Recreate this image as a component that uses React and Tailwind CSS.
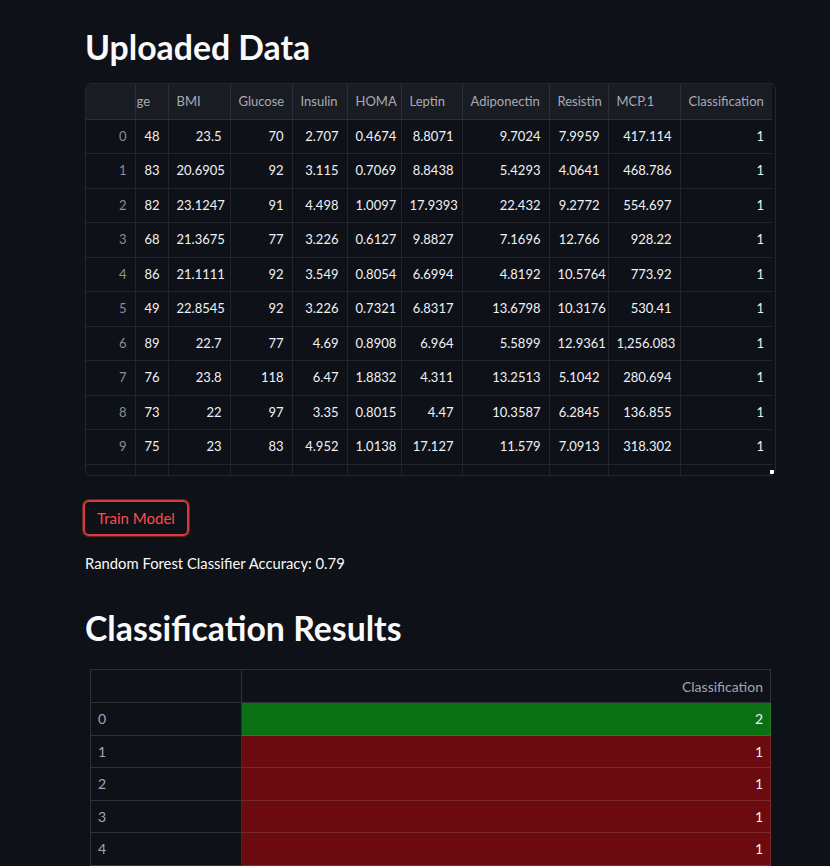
import React from 'react';

const columns = [
  { key: 'idx', label: '', width: 49 },
  { key: 'age', label: 'ge', width: 33 },
  { key: 'bmi', label: 'BMI', width: 62 },
  { key: 'glucose', label: 'Glucose', width: 62 },
  { key: 'insulin', label: 'Insulin', width: 55 },
  { key: 'homa', label: 'HOMA', width: 54 },
  { key: 'leptin', label: 'Leptin', width: 61 },
  { key: 'adipo', label: 'Adiponectin', width: 87 },
  { key: 'resistin', label: 'Resistin', width: 59 },
  { key: 'mcp', label: 'MCP.1', width: 72 },
  { key: 'cls', label: 'Classification', width: 92 },
];

const rows = [
  ['48', '23.5', '70', '2.707', '0.4674', '8.8071', '9.7024', '7.9959', '417.114', '1'],
  ['83', '20.6905', '92', '3.115', '0.7069', '8.8438', '5.4293', '4.0641', '468.786', '1'],
  ['82', '23.1247', '91', '4.498', '1.0097', '17.9393', '22.432', '9.2772', '554.697', '1'],
  ['68', '21.3675', '77', '3.226', '0.6127', '9.8827', '7.1696', '12.766', '928.22', '1'],
  ['86', '21.1111', '92', '3.549', '0.8054', '6.6994', '4.8192', '10.5764', '773.92', '1'],
  ['49', '22.8545', '92', '3.226', '0.7321', '6.8317', '13.6798', '10.3176', '530.41', '1'],
  ['89', '22.7', '77', '4.69', '0.8908', '6.964', '5.5899', '12.9361', '1,256.083', '1'],
  ['76', '23.8', '118', '6.47', '1.8832', '4.311', '13.2513', '5.1042', '280.694', '1'],
  ['73', '22', '97', '3.35', '0.8015', '4.47', '10.3587', '6.2845', '136.855', '1'],
  ['75', '23', '83', '4.952', '1.0138', '17.127', '11.579', '7.0913', '318.302', '1'],
];

const results = ['2', '1', '1', '1', '1'];

function DataGrid() {
  return (
    <div className="relative h-[393px] w-[691px] overflow-hidden rounded-md border border-[#262730] bg-[#0e1117]">
      <table className="table-fixed border-collapse text-[13px]" style={{ width: 686 }}>
        <colgroup>
          {columns.map((c) => (
            <col key={c.key} style={{ width: c.width }} />
          ))}
        </colgroup>
        <thead>
          <tr className="h-[35px] bg-[#1a1c24]">
            {columns.map((c, i) => (
              <th
                key={c.key}
                className={`border-b border-[#2d2f38] text-left font-normal text-[#a7aab4] ${i === 0 ? '' : 'border-l'} ${i === 1 ? 'pl-[1px]' : 'px-2'}`}
              >
                {c.label}
              </th>
            ))}
          </tr>
        </thead>
        <tbody>
          {rows.map((r, ri) => (
            <tr key={ri} className="h-[34.5px]">
              <td className="border-b border-[#23252d] px-2 text-right text-[#8b8e98]">{ri}</td>
              {r.map((v, ci) => (
                <td key={ci} className="border-b border-l border-[#23252d] px-2 text-right text-[#f0f2f6]">
                  {v}
                </td>
              ))}
            </tr>
          ))}
          <tr className="h-[34.5px]">
            <td />
            {rows[0].map((_, ci) => (
              <td key={ci} className="border-l border-[#23252d]" />
            ))}
          </tr>
        </tbody>
      </table>
      <div className="absolute bottom-[1px] right-[1px] h-[4px] w-[4px] bg-white" />
    </div>
  );
}

function ResultsTable() {
  return (
    <table className="ml-[5px] w-[681px] table-fixed border-collapse text-[14px]">
      <colgroup>
        <col style={{ width: 151 }} />
        <col />
      </colgroup>
      <thead>
        <tr className="h-[33px]">
          <th className="border border-[#2f3139] bg-[#0e1117]" />
          <th className="border border-[#2f3139] px-[7px] text-right font-normal text-[#a3a6b1]">Classification</th>
        </tr>
      </thead>
      <tbody>
        {results.map((v, i) => (
          <tr key={i} className="h-[32.5px]">
            <td className="border border-[#2f3139] px-[7px] text-left text-[#a3a6b1]">{i}</td>
            <td
              className={`border px-[7px] text-right text-[#f0f2f6] ${
                v === '2' ? 'border-[#2a7a2a] bg-[#0b7014]' : 'border-[#7d2a2d] bg-[#6b0a0f]'
              }`}
            >
              {v}
            </td>
          </tr>
        ))}
      </tbody>
    </table>
  );
}

export default function App() {
  return (
    <div
      className="h-[866px] w-[830px] overflow-hidden bg-[#0e1117] pl-[85px] text-[#fafafa]"
      style={{ fontFamily: 'Lato, "Noto Sans", sans-serif' }}
    >
      <h2 className="pt-[26px] text-[33.8px] font-bold leading-[42px]">Uploaded Data</h2>
      <div className="mt-[15px]">
        <DataGrid />
      </div>
      <button className="ml-[-2px] mt-[24px] h-[36px] rounded-md border-2 border-[#d83b3b] px-3 text-[15px] text-[#ff4b4b] shadow-[0_0_0_1px_rgba(255,75,75,0.35)]">
        Train Model
      </button>
      <p className="mt-[16px] text-[14.8px] leading-[22px]">Random Forest Classifier Accuracy: 0.79</p>
      <h2 className="mt-[33px] text-[33.8px] font-bold leading-[42px]">Classification Results</h2>
      <div className="mt-[20px]">
        <ResultsTable />
      </div>
    </div>
  );
}
